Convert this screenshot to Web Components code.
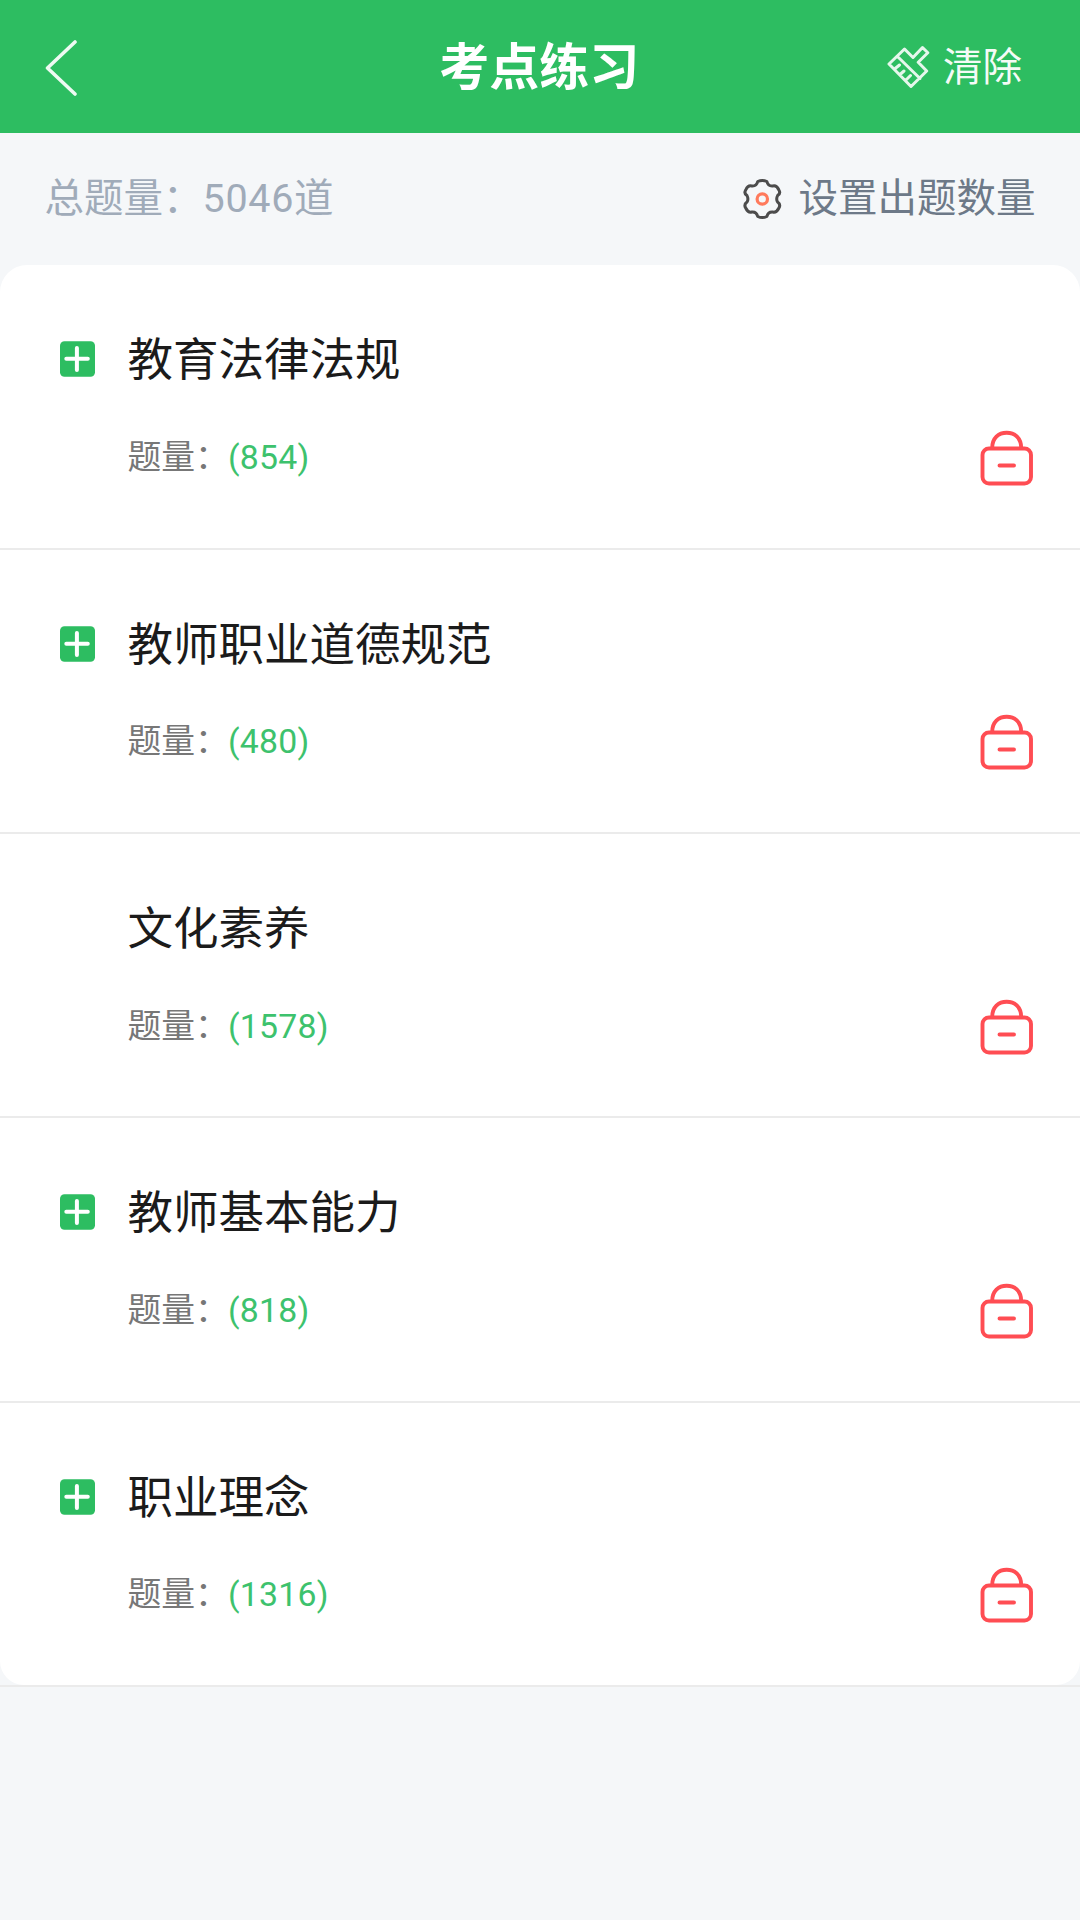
<!DOCTYPE html>
<html lang="zh-CN">
<head>
<meta charset="utf-8">
<title>考点练习</title>
<style>
html,body{margin:0;height:100%;background:#f5f7f9}
body{font-family:Roboto,"Noto Sans CJK SC",sans-serif}
</style>
</head>
<body>
<practice-page></practice-page>
<script>
const define = (name, html, setup) => customElements.define(name, class extends HTMLElement {
  connectedCallback() {
    if (this.shadowRoot) return;
    const t = document.createElement('template');
    t.innerHTML = html;
    this.attachShadow({ mode: 'open' }).append(t.content.cloneNode(true));
    if (setup) setup(this);
  }
});

define('icon-back', `<style>:host{display:block;width:36px;height:60px}svg{display:block}</style>
<svg width="36" height="60" fill="none" stroke="#fff" stroke-opacity=".92" stroke-width="3.6" stroke-linecap="round" stroke-linejoin="round"><path d="M30 4 2.500 30 30 56"/></svg>`);

define('icon-brush', `<style>:host{display:block;width:44px;height:44px}svg{display:block}</style>
<svg width="44" height="44" fill="none" stroke="#fff" stroke-opacity=".88" stroke-width="3" stroke-linejoin="round" stroke-linecap="round"><path d="M2 20 17.500 5 26 13.500 35.500 3.500 40.800 8.800 31.200 18.200 39.700 27 24 42.500ZM10.500 12.500 33 34.500M7.500 25l5-4M13 30.500l4-3.500M18.500 36.500l5-5"/></svg>`);

define('icon-gear', `<style>:host{display:block;width:40px;height:42px}svg{display:block}</style>
<svg width="40" height="42" fill="none"><path d="M15.700 3.500Q20.300 1.300 24.900 3.500Q26 8.400 30.800 8Q34.500 6.900 36.900 12Q39 15.200 35.600 17.600Q33.800 21 35.600 24Q39 26.500 36.900 30Q34.500 35 30.800 34Q26 33.600 24.900 38.500Q20.300 40.700 15.700 38.500Q14.600 33.600 9.800 34Q6 35 3.700 30Q1.600 26.500 5 24Q6.800 21 5 17.600Q1.600 15.200 3.700 12Q6 6.900 9.800 8Q14.600 8.400 15.700 3.500Z" stroke="#4c4c4c" stroke-width="3" stroke-linejoin="round"/><circle cx="20.300" cy="21" r="5.200" stroke="#ff7a5c" stroke-width="3.200"/></svg>`);

define('icon-plus', `<style>:host{display:block;width:36px;height:36px}svg{display:block}</style>
<svg width="36" height="36"><rect x="0" y=".3" width="35" height="35.500" rx="4.500" fill="#2dbd61"/><path d="M6.300 17.700h21.500M16.900 7v22" stroke="#fff" stroke-width="4" stroke-linecap="round"/></svg>`);

define('icon-lock', `<style>:host{display:block;width:54px;height:56px}svg{display:block}</style>
<svg width="54" height="56" fill="none" stroke="#ff4d53" stroke-width="3.900" stroke-linecap="round"><rect x="2.500" y="18.500" width="48.500" height="35" rx="6.500"/><path d="M12.200 18C12.200 8 18.500 2.800 26.700 2.800S41.200 8 41.200 18M19.500 35.500h14.500"/></svg>`);

define('top-bar', `<style>
:host{display:grid;grid-template-columns:1fr auto 1fr;align-items:center;height:132.700px;box-sizing:border-box;padding:0 57px 0 44.500px;background:#2dbd61;color:#fff}
h1{margin:0;font-size:50px;line-height:60px;font-weight:700;padding:4px 0 0 11px}
.r{display:flex;justify-content:flex-end;align-items:center;gap:13px;font-size:39.500px;line-height:48px}
.r span{opacity:.95;margin:4px 1px 0 -1px}icon-back{margin-top:3px}
</style><icon-back></icon-back><h1><slot></slot></h1><div class="r"><icon-brush></icon-brush><span>清除</span></div>`);

define('summary-bar', `<style>
:host{display:flex;justify-content:space-between;align-items:center;height:132.800px;box-sizing:border-box;padding:0 44.500px 1px 44.500px;font-size:39.500px;line-height:48px;color:#a0abb9}
.t{padding-top:1.500px}.t b{font-weight:400;letter-spacing:.7px}
.s{display:flex;align-items:center;gap:16.500px;color:#6d7988}
icon-gear{margin-top:1px}
</style><div class="t">总题量：<b><slot></slot></b>道</div><div class="s"><icon-gear></icon-gear><span>设置出题数量</span></div>`);

define('topic-row', `<style>
:host{display:flex;height:284.300px;box-sizing:border-box;border-bottom:2px solid #ebebeb;padding:63px 46.300px 0 59.500px}
.m{width:68px;padding-top:13px;box-sizing:border-box}
.c{flex:1}
.n{font-size:45.500px;line-height:60px;color:#1b1b1b;padding-top:3px}
.q{display:flex;font-size:33.800px;line-height:40px;color:#777;margin-top:46.600px}
.q b{font-weight:400;color:#3dc26d;margin-left:-1px;letter-spacing:.25px}
icon-lock{margin-top:101.500px}
</style><div class="m"></div><div class="c"><div class="n"><slot></slot></div><div class="q"><span>题量：</span><b></b></div></div><icon-lock></icon-lock>`, el => {
  el.shadowRoot.querySelector('b').textContent = '(' + el.getAttribute('count') + ')';
  if (el.hasAttribute('expandable')) el.shadowRoot.querySelector('.m').append(document.createElement('icon-plus'));
});

define('topic-list', `<style>:host{display:block}
.wrap{background:#fff;border-radius:27px 27px 24px 24px}
.end{height:2px;background:#ebebeb}
::slotted(:last-child){border-bottom:0!important;height:282.400px!important}
</style><div class="wrap"><slot></slot></div><div class="end"></div>`);

define('practice-page', `<style>:host{display:flex;flex-direction:column;width:1080px;height:1920px;overflow:hidden;background:#f5f7f9}</style>
<top-bar>考点练习</top-bar>
<summary-bar>5046</summary-bar>
<topic-list>
<topic-row count="854" expandable>教育法律法规</topic-row>
<topic-row count="480" expandable>教师职业道德规范</topic-row>
<topic-row count="1578">文化素养</topic-row>
<topic-row count="818" expandable>教师基本能力</topic-row>
<topic-row count="1316" expandable>职业理念</topic-row>
</topic-list>`);
</script>
</body>
</html>
